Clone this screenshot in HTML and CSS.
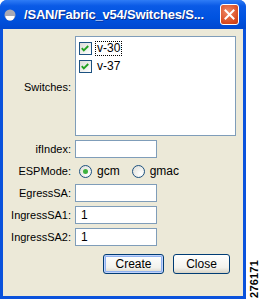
FILE: index.html
```html
<!DOCTYPE html>
<html lang="en">
<head>
    <meta charset="UTF-8">
    <title>Create</title>
    <link rel="stylesheet" href="styles.css">
</head>
<body>
    <div class="page">
        <div class="window">
            <div class="titlebar">
                <svg class="app-icon" width="12" height="12" viewBox="0 0 12 12">
                    <circle cx="6" cy="6" r="5.5" fill="#a9a9b4"/>
                    <path d="M1.5 7 H10.5 A4.5 4.5 0 0 1 1.5 7 Z" fill="#ffffff"/>
                </svg>
                <span class="title">/SAN/Fabric_v54/Switches/S...</span>
                <div class="close-btn">
                    <svg width="17" height="19" viewBox="0 0 17 19">
                        <path d="M4.5 5.5 L12.5 13.5 M12.5 5.5 L4.5 13.5" stroke="#ffffff" stroke-width="2" stroke-linecap="square"/>
                    </svg>
                </div>
            </div>
            <div class="content">
                <div class="form">
                    <label class="lbl lbl-list">Switches:</label>
                    <div class="listbox">
                        <div class="item">
                            <span class="check">
                                <svg width="13" height="13" viewBox="0 0 13 13"><path d="M3 6 L5.2 8.5 L10 3.8" fill="none" stroke="#21a121" stroke-width="2"/></svg>
                            </span>
                            <span class="item-text focused">v-30</span>
                        </div>
                        <div class="item">
                            <span class="check">
                                <svg width="13" height="13" viewBox="0 0 13 13"><path d="M3 6 L5.2 8.5 L10 3.8" fill="none" stroke="#21a121" stroke-width="2"/></svg>
                            </span>
                            <span class="item-text">v-37</span>
                        </div>
                    </div>

                    <label class="lbl">ifIndex:</label>
                    <div class="field"></div>

                    <label class="lbl">ESPMode:</label>
                    <div class="radios">
                        <span class="radio on"></span><span class="radio-text">gcm</span>
                        <span class="radio"></span><span class="radio-text">gmac</span>
                    </div>

                    <label class="lbl">EgressSA:</label>
                    <div class="field"></div>

                    <label class="lbl">IngressSA1:</label>
                    <div class="field">1</div>

                    <label class="lbl">IngressSA2:</label>
                    <div class="field">1</div>
                </div>
                <div class="buttons">
                    <button class="btn default">Create</button>
                    <button class="btn">Close</button>
                </div>
            </div>
        </div>
        <div class="tag">276171</div>
    </div>
</body>
</html>
```

FILE: styles.css
```css
body {
    margin: 0;
    background: #ffffff;
    font-family: "Liberation Sans", Arial, sans-serif;
    font-size: 11px;
    color: #000000;
}
.page {
    display: flex;
    width: 260px;
    height: 300px;
}
.window {
    width: 246px;
    height: 299px;
    display: flex;
    flex-direction: column;
    background: #0a52dc;
    border-radius: 7px 7px 0 0;
    box-sizing: border-box;
    padding: 0 3px 3px 3px;
}
.titlebar {
    height: 29px;
    display: flex;
    align-items: center;
    background: linear-gradient(#2f7cf6 0%, #0a5ae6 20%, #0053e0 60%, #0048d0 100%);
    margin: 0 -3px;
    padding: 0 3px 0 4px;
    border-radius: 7px 7px 0 0;
}
.app-icon {
    margin: 1px 0 0 0;
    flex: none;
}
.title {
    flex: 1;
    margin-left: 8px;
    color: #ffffff;
    font-weight: bold;
    font-size: 13px;
    letter-spacing: -0.2px;
    text-shadow: 1px 1px 0 #0a2a8a;
    white-space: nowrap;
}
.close-btn {
    width: 17px;
    height: 19px;
    margin-right: 4px;
    border: 1px solid #ffffff;
    border-radius: 3px;
    background: radial-gradient(circle at 40% 35%, #f08a68, #d84a20 70%, #c23a12);
    display: flex;
}
.content {
    flex: 1;
    background: #ece9d8;
    padding-top: 7px;
}
.form {
    display: grid;
    grid-template-columns: 68px 82px 1fr;
    column-gap: 4px;
    row-gap: 4px;
}
.lbl {
    grid-column: 1;
    justify-self: end;
    align-self: center;
    white-space: nowrap;
}
.lbl-list {
    margin-top: 2px;
}
.listbox {
    grid-column: 2 / 4;
    width: 161px;
    height: 100px;
    box-sizing: border-box;
    background: #ffffff;
    border: 1px solid #7f9db9;
    padding: 5px 0 0 3px;
}
.item {
    display: flex;
    align-items: center;
    height: 13px;
    margin-bottom: 5px;
}
.check {
    width: 11px;
    height: 11px;
    border: 1px solid #1c5180;
    background: linear-gradient(135deg, #dcdcd7, #ffffff);
    display: flex;
    overflow: hidden;
}
.check svg {
    margin: -1px 0 0 -1px;
}
.item-text {
    margin-left: 4px;
    font-size: 12px;
    line-height: 13px;
    padding: 0 1px;
}
.focused {
    outline: 1px dotted #000000;
}
.field {
    grid-column: 2;
    height: 18px;
    box-sizing: border-box;
    background: #ffffff;
    border: 1px solid #7f9db9;
    padding: 0 5px;
    line-height: 16px;
    font-size: 12px;
}
.radios {
    grid-column: 2 / 4;
    display: flex;
    align-items: center;
    height: 18px;
}
.radio {
    width: 11px;
    height: 11px;
    border: 1px solid #1c5180;
    border-radius: 50%;
    background: radial-gradient(circle at 70% 70%, #ffffff, #dcdcd5);
    margin-left: 4px;
    display: flex;
    align-items: center;
    justify-content: center;
}
.radio.on::after {
    content: "";
    width: 5px;
    height: 5px;
    border-radius: 50%;
    background: #3fb23f;
}
.radio-text {
    margin-left: 5px;
    margin-right: 8px;
    font-size: 12px;
}
.buttons {
    display: flex;
    gap: 9px;
    margin: 8px 0 0 100px;
}
.btn {
    font-family: "Liberation Sans", Arial, sans-serif;
    font-size: 12px;
    height: 20px;
    border: 1px solid #003c74;
    border-radius: 3px;
    background: linear-gradient(#ffffff, #f3f2ec 70%, #d8d4c6);
    padding: 0;
    width: 57px;
    color: #000000;
}
.btn.default {
    width: 61px;
    box-shadow: inset 0 0 0 1px #c2d3fc, inset 0 0 0 2px #8fb1ef;
}
.tag {
    writing-mode: vertical-rl;
    transform: rotate(180deg);
    align-self: flex-end;
    font-size: 11px;
    font-weight: bold;
    margin: 0 0 2px 2px;
    letter-spacing: 0.2px;
}
```
